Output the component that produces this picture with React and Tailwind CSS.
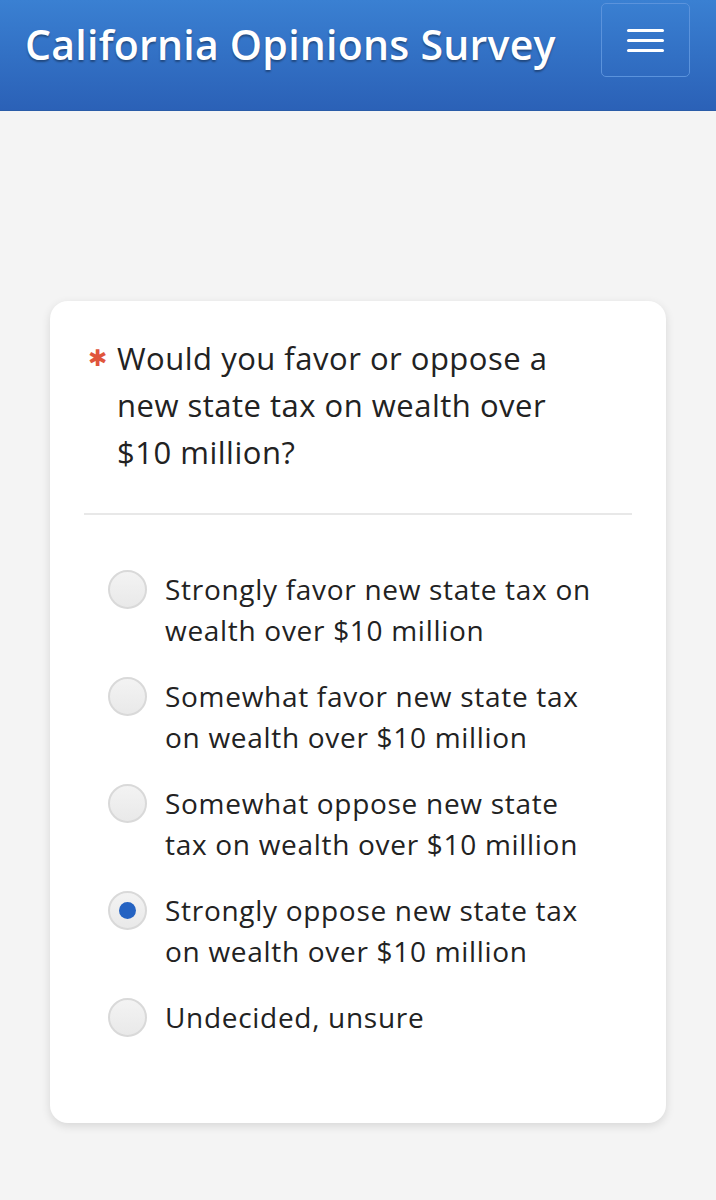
const OPTIONS = [
  { id: "sf", lines: ["Strongly favor new state tax on", "wealth over $10 million"] },
  { id: "wf", lines: ["Somewhat favor new state tax", "on wealth over $10 million"] },
  { id: "wo", lines: ["Somewhat oppose new state", "tax on wealth over $10 million"] },
  { id: "so", lines: ["Strongly oppose new state tax", "on wealth over $10 million"], checked: true },
  { id: "un", lines: ["Undecided, unsure"] },
];

export default function App() {
  return (
    <div className="min-h-[1200px] bg-[#f4f4f4] font-['Open_Sans',sans-serif]">
      <header className="flex h-[111px] items-start justify-between border-b border-[#2a5ca8] bg-gradient-to-b from-[#3a80d2] to-[#2b61b7] pl-[25px] pr-[26px]">
        <h1 className="mt-[14px] text-[41px] font-semibold tracking-[0.25px] text-white [text-shadow:0_2px_2px_rgba(0,0,0,0.35)]">
          California Opinions Survey
        </h1>
        <button className="mt-[3px] flex h-[74px] w-[89px] flex-col items-center justify-center gap-[7px] rounded-[5px] border border-[#5b93dc]">
          <span className="h-[3px] w-[37px] rounded-full bg-white" />
          <span className="h-[3px] w-[37px] rounded-full bg-white" />
          <span className="h-[3px] w-[37px] rounded-full bg-white" />
        </button>
      </header>

      <main className="px-[50px] pt-[190px] pb-[78px]">
        <section className="rounded-[18px] bg-white px-[34px] pt-[34px] pb-[85px] shadow-[0_3px_10px_rgba(0,0,0,0.12)]">
          <div className="flex items-start gap-[10px] pl-[4px]">
            <span className="-mt-[1px] text-[23px] leading-[47px] text-[#e0553c]">✱</span>
            <h2 className="text-[31px] leading-[47px] tracking-[0.5px] text-[#222]">
              Would you favor or oppose a
              <br />
              new state tax on wealth over
              <br />
              $10 million?
            </h2>
          </div>

          <div className="mt-[37px] h-[2px] bg-[#e8e8e8]" />

          <ul className="mt-[54px] flex flex-col gap-[25px] pl-[24px]">
            {OPTIONS.map((o) => (
              <li key={o.id} className="flex items-start gap-[18px]">
                <span className="mt-[1px] flex h-[39px] w-[39px] shrink-0 items-center justify-center rounded-full border-2 border-[#d9d9d9] bg-gradient-to-b from-[#f3f3f3] to-[#e9e9e9]">
                  {o.checked && <span className="h-[17px] w-[17px] rounded-full bg-[#2563c2]" />}
                </span>
                <span className="text-[28px] leading-[41px] tracking-[0.7px] text-[#222]">
                  {o.lines.map((l, i) => (
                    <span key={i} className="block whitespace-nowrap">{l}</span>
                  ))}
                </span>
              </li>
            ))}
          </ul>
        </section>
      </main>
    </div>
  );
}
